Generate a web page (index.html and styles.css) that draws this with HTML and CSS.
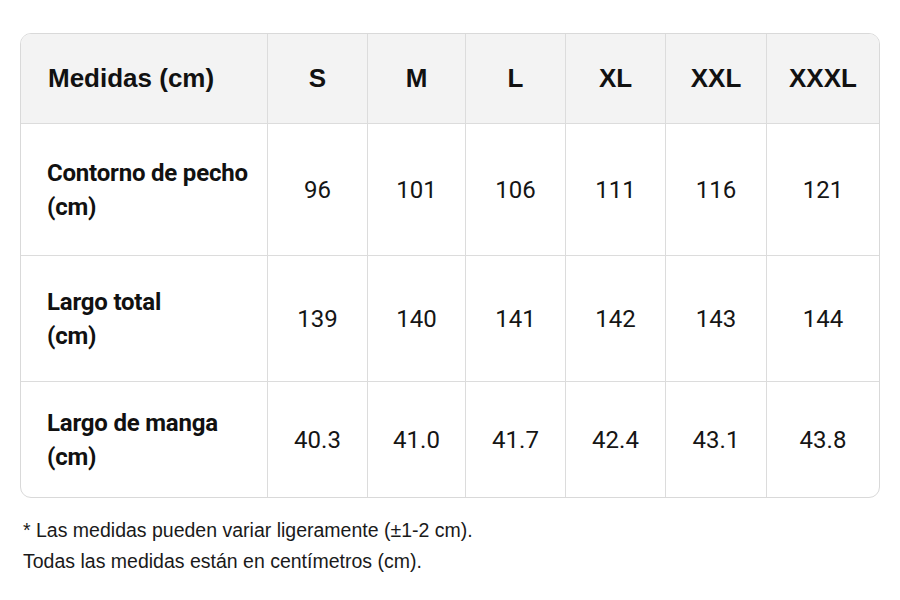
FILE: index.html
```html
<!DOCTYPE html>
<html lang="es">
<head>
<meta charset="utf-8">
<title>Tabla de medidas</title>
<link rel="stylesheet" href="styles.css">
</head>
<body>
<div class="page">
  <div class="table-wrap">
    <table class="sizes">
      <colgroup>
        <col class="c-label">
        <col class="c-s">
        <col class="c-m">
        <col class="c-l">
        <col class="c-xl">
        <col class="c-xxl">
        <col class="c-xxxl">
      </colgroup>
      <thead>
        <tr class="r-head">
          <th class="label">Medidas (cm)</th>
          <th>S</th>
          <th>M</th>
          <th>L</th>
          <th>XL</th>
          <th>XXL</th>
          <th>XXXL</th>
        </tr>
      </thead>
      <tbody>
        <tr class="r-1">
          <th class="label">Contorno de pecho<br>(cm)</th>
          <td>96</td><td>101</td><td>106</td><td>111</td><td>116</td><td>121</td>
        </tr>
        <tr class="r-2">
          <th class="label">Largo total<br>(cm)</th>
          <td>139</td><td>140</td><td>141</td><td>142</td><td>143</td><td>144</td>
        </tr>
        <tr class="r-3">
          <th class="label">Largo de manga<br>(cm)</th>
          <td>40.3</td><td>41.0</td><td>41.7</td><td>42.4</td><td>43.1</td><td>43.8</td>
        </tr>
      </tbody>
    </table>
  </div>
  <div class="notes">
    <p>* Las medidas pueden variar ligeramente (±1-2 cm).</p>
    <p>Todas las medidas están en centímetros (cm).</p>
  </div>
</div>
</body>
</html>
```

FILE: styles.css
```css
html, body {
  margin: 0;
  padding: 0;
  background: #ffffff;
}

.page {
  padding: 33px 20px 0 20px;
  font-family: "Liberation Sans", Arial, sans-serif;
  color: #111111;
}

.table-wrap {
  width: 860px;
  box-sizing: border-box;
  border: 1.5px solid #d9d9d9;
  border-radius: 11px;
  overflow: hidden;
}

.sizes {
  width: 100%;
  border-collapse: separate;
  border-spacing: 0;
  table-layout: fixed;
}

.c-label { width: 247px; }
.c-s { width: 100px; }
.c-m { width: 98px; }
.c-l { width: 100px; }
.c-xl { width: 100px; }
.c-xxl { width: 101px; }
.c-xxxl { width: auto; }

.sizes th,
.sizes td {
  border-right: 1.5px solid #dcdcdc;
  border-bottom: 1.5px solid #dcdcdc;
  text-align: center;
  vertical-align: middle;
  padding: 0;
}

.sizes tr > :last-child {
  border-right: none;
}

.sizes tbody tr:last-child > * {
  border-bottom: none;
}

.r-head { height: 90px; }
.r-1 { height: 132px; }
.r-2 { height: 126px; }
.r-3 { height: 115px; }

.r-head th {
  background: #f3f3f3;
  font-family: "Liberation Sans", Arial, sans-serif;
  font-weight: 700;
  font-size: 26px;
  color: #111111;
}

.r-head th.label {
  text-align: left;
  padding-left: 27px;
}

tbody th.label {
  text-align: left;
  padding-left: 26px;
  font-family: Roboto, "Liberation Sans", sans-serif;
  font-weight: 700;
  font-size: 24px;
  line-height: 34px;
  letter-spacing: -0.2px;
  color: #111111;
}

tbody td {
  font-family: Roboto, "Liberation Sans", sans-serif;
  font-weight: 400;
  font-size: 24px;
  color: #151515;
}

.notes {
  margin-top: 17px;
  padding-left: 3px;
  font-family: "Liberation Sans", Arial, sans-serif;
  font-size: 19.5px;
  line-height: 31px;
  color: #1a1a1a;
}

.notes p {
  margin: 0;
}
```
